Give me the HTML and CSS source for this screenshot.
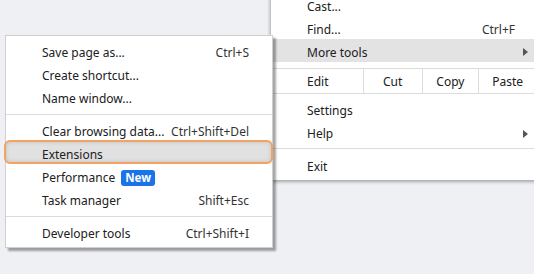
FILE: index.html
```html
<!DOCTYPE html>
<html lang="en">
<head>
    <meta charset="UTF-8">
    <title>More tools menu</title>
    <link rel="stylesheet" href="styles.css">
</head>
<body>

    <!-- main browser menu -->
    <div class="menu main-menu">
        <div class="item low">Cast...</div>
        <div class="item low">Find... <span class="key">Ctrl+F</span></div>
        <div class="item low active">More tools <span class="arrow"></span></div>
        <div class="edit-row">
            <div class="edit-label">Edit</div>
            <div class="edit-btn cut">Cut</div>
            <div class="edit-btn copy">Copy</div>
            <div class="edit-btn paste">Paste</div>
        </div>
        <div class="item first">Settings</div>
        <div class="item">Help <span class="arrow"></span></div>
        <div class="sep"></div>
        <div class="item">Exit</div>
    </div>

    <!-- more tools submenu -->
    <div class="menu sub-menu">
        <div class="item">Save page as... <span class="key">Ctrl+S</span></div>
        <div class="item">Create shortcut...</div>
        <div class="item">Name window...</div>
        <div class="sep"></div>
        <div class="item">Clear browsing data... <span class="key">Ctrl+Shift+Del</span></div>
        <div class="item marked">Extensions</div>
        <div class="item">Performance <span class="badge">New</span></div>
        <div class="item">Task manager <span class="key">Shift+Esc</span></div>
        <div class="sep"></div>
        <div class="item">Developer tools <span class="key">Ctrl+Shift+I</span></div>
    </div>

</body>
</html>
```

FILE: styles.css
```css
body {
    margin: 0;
    width: 534px;
    height: 274px;
    overflow: hidden;
    position: relative;
    background-color: #eff0f4;
    font-family: 'Noto Sans', 'Open Sans', sans-serif;
    font-size: 12px;
    color: #202020;
}

.menu {
    position: absolute;
    background-color: #fff;
    box-sizing: border-box;
}

.item {
    display: flex;
    align-items: center;
    height: 23px;
    padding-left: 36px;
    position: relative;
    box-sizing: border-box;
}

.key {
    margin-left: auto;
    color: #333;
}

.sep {
    height: 1px;
    background-color: #dcdcdc;
}

/* main menu */
.main-menu {
    left: 270px;
    top: -7px;
    width: 266px;
    border-left: 1px solid #c4c4c4;
    padding-bottom: 2px;
    box-shadow: 0 2px 3px rgba(0, 0, 0, 0.3);
}

.main-menu .item {
    padding-right: 21px;
}

.main-menu .low {
    padding-top: 3px;
}

.main-menu .active {
    background-color: #e3e3e3;
}

.arrow {
    margin-left: auto;
    margin-right: -13px;
    width: 0;
    height: 0;
    border-top: 4px solid transparent;
    border-bottom: 4px solid transparent;
    border-left: 5px solid #555;
}

.edit-row {
    display: flex;
    height: 24px;
    margin-top: 6px;
    border-top: 1px solid #dcdcdc;
    border-bottom: 1px solid #dcdcdc;
}

.edit-label {
    width: 92px;
    padding-left: 36px;
    box-sizing: border-box;
    display: flex;
    align-items: center;
}

.edit-btn {
    display: flex;
    align-items: center;
    justify-content: center;
    border-left: 1px solid #dcdcdc;
    box-sizing: border-box;
}

.cut { width: 59px; }
.copy { width: 57px; }
.paste { width: 58px; }

.main-menu .first {
    margin-top: 5px;
}

.main-menu .sep {
    margin: 3px 0 6px;
}

/* submenu */
.sub-menu {
    left: 5px;
    top: 35px;
    width: 268px;
    border: 1px solid #cfcfcf;
    padding: 5px 0 2px;
    box-shadow: 3px 3px 2px rgba(0, 0, 0, 0.35);
}

.sub-menu .item {
    padding-left: 36px;
    padding-right: 23px;
}

.sub-menu .sep {
    margin: 4px 0 5px;
}

.marked {
    z-index: 1;
}

.marked::before {
    content: '';
    position: absolute;
    z-index: -1;
    left: -2px;
    top: -3px;
    width: 269px;
    height: 24px;
    box-sizing: border-box;
    border: 2px solid #f2a362;
    border-radius: 6px;
    background-color: #e1e1e1;
    box-shadow: inset 0 0 4px rgba(0, 0, 0, 0.15);
}

.badge {
    margin-left: 6px;
    background-color: #1a73e8;
    color: #fff;
    font-weight: bold;
    font-size: 11.5px;
    padding: 0 4px;
    height: 16px;
    line-height: 16px;
    border-radius: 3px;
}
```
